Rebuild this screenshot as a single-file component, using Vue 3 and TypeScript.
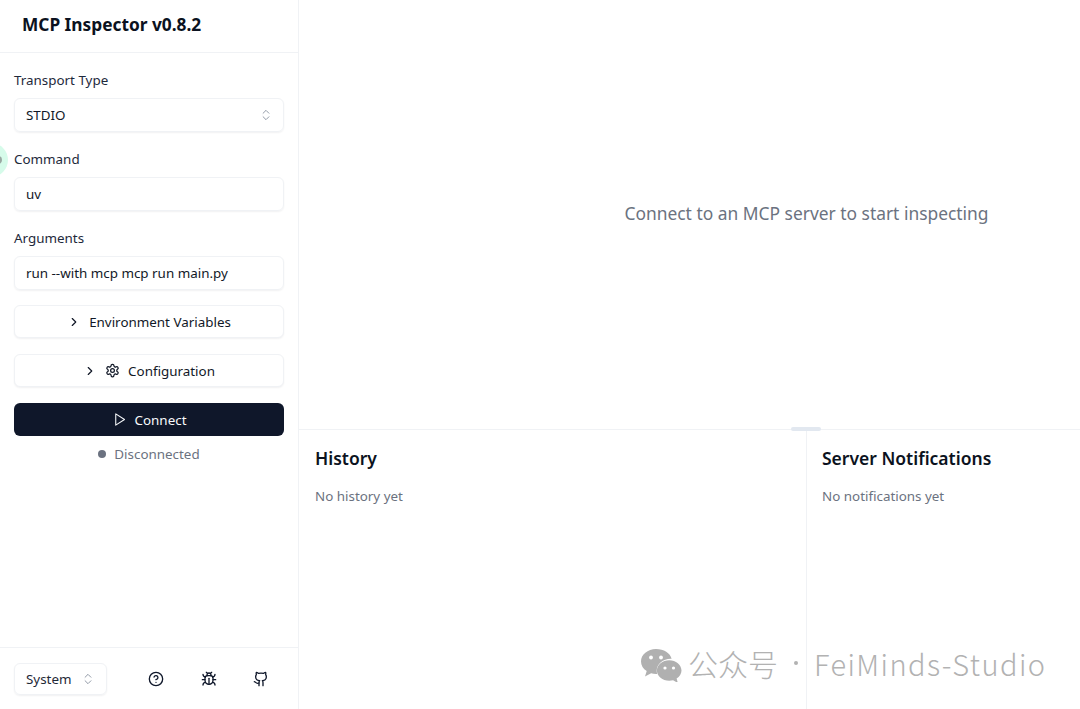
<template>
  <div class="app">
    <aside class="sidebar">
      <div class="side-head">
        <h1>MCP Inspector v0.8.2</h1>
      </div>

      <div class="side-form">
        <div class="field">
          <label>Transport Type</label>
          <div class="control select-control">
            <span>STDIO</span>
            <svg class="chev-updown" viewBox="0 0 24 24"><path d="m7 15 5 5 5-5" /><path d="m7 9 5-5 5 5" /></svg>
          </div>
        </div>
        <div class="field">
          <label>Command</label>
          <div class="control">uv</div>
        </div>
        <div class="field">
          <label>Arguments</label>
          <div class="control">{{ args }}</div>
        </div>

        <button class="outline-btn env-btn">
          <svg class="icon chev" viewBox="0 0 24 24"><path d="m9 18 6-6-6-6" /></svg>
          <span>Environment Variables</span>
        </button>
        <button class="outline-btn conf-btn">
          <svg class="icon chev" viewBox="0 0 24 24"><path d="m9 18 6-6-6-6" /></svg>
          <svg class="icon gear" viewBox="0 0 24 24">
            <path d="M12.22 2h-.44a2 2 0 0 0-2 2v.18a2 2 0 0 1-1 1.73l-.43.25a2 2 0 0 1-2 0l-.15-.08a2 2 0 0 0-2.73.73l-.22.38a2 2 0 0 0 .73 2.73l.15.1a2 2 0 0 1 1 1.72v.51a2 2 0 0 1-1 1.74l-.15.09a2 2 0 0 0-.73 2.73l.22.38a2 2 0 0 0 2.73.73l.15-.08a2 2 0 0 1 2 0l.43.25a2 2 0 0 1 1 1.73V20a2 2 0 0 0 2 2h.44a2 2 0 0 0 2-2v-.18a2 2 0 0 1 1-1.73l.43-.25a2 2 0 0 1 2 0l.15.08a2 2 0 0 0 2.73-.73l.22-.39a2 2 0 0 0-.73-2.73l-.15-.08a2 2 0 0 1-1-1.74v-.5a2 2 0 0 1 1-1.74l.15-.09a2 2 0 0 0 .73-2.73l-.22-.38a2 2 0 0 0-2.73-.73l-.15.08a2 2 0 0 1-2 0l-.43-.25a2 2 0 0 1-1-1.73V4a2 2 0 0 0-2-2z" />
            <circle cx="12" cy="12" r="3" />
          </svg>
          <span>Configuration</span>
        </button>
        <button class="connect-btn">
          <svg class="icon play" viewBox="0 0 24 24"><polygon points="6 3 20 12 6 21 6 3" /></svg>
          <span>Connect</span>
        </button>
        <div class="status">
          <i class="status-dot"></i>
          <span>Disconnected</span>
        </div>
      </div>

      <div class="side-foot">
        <div class="theme-select">
          <span>System</span>
          <svg class="chev-updown" viewBox="0 0 24 24"><path d="m7 15 5 5 5-5" /><path d="m7 9 5-5 5 5" /></svg>
        </div>
        <div class="foot-icons">
          <svg class="foot-icon" viewBox="0 0 24 24">
            <circle cx="12" cy="12" r="10" />
            <path d="M9.09 9a3 3 0 0 1 5.83 1c0 2-3 3-3 3" />
            <path d="M12 17h.01" />
          </svg>
          <svg class="foot-icon" viewBox="0 0 24 24">
            <path d="m8 2 1.88 1.88" /><path d="M14.12 3.88 16 2" />
            <path d="M9 7.13v-1a3.003 3.003 0 1 1 6 0v1" />
            <path d="M12 20c-3.3 0-6-2.7-6-6v-3a4 4 0 0 1 4-4h4a4 4 0 0 1 4 4v3c0 3.3-2.7 6-6 6" />
            <path d="M12 20v-9" /><path d="M6.53 9C4.6 8.8 3 7.1 3 5" /><path d="M6 13H2" />
            <path d="M3 21c0-2.1 1.7-3.9 3.8-4" /><path d="M20.97 5c0 2.1-1.6 3.8-3.5 4" />
            <path d="M22 13h-4" /><path d="M17.2 17c2.1.1 3.8 1.9 3.8 4" />
          </svg>
          <svg class="foot-icon" viewBox="0 0 24 24">
            <path d="M15 22v-4a4.8 4.8 0 0 0-1-3.5c3 0 6-2 6-5.5.08-1.25-.27-2.48-1-3.5.28-1.15.28-2.35 0-3.5 0 0-1 0-3 1.5-2.64-.5-5.36-.5-8 0C6 2 5 2 5 2c-.3 1.15-.3 2.35 0 3.5A5.403 5.403 0 0 0 4 9c0 3.5 3 5.5 6 5.5-.39.49-.68 1.05-.85 1.65-.17.6-.22 1.23-.15 1.85v4" />
            <path d="M9 18c-4.51 2-5-2-7-2" />
          </svg>
        </div>
      </div>
    </aside>

    <main class="main">
      <section class="top-pane">
        <p class="empty-msg">Connect to an MCP server to start inspecting</p>
      </section>
      <div class="resize-bar"><span class="handle"></span></div>
      <section class="bottom-pane">
        <div class="log-col history-col">
          <h2>History</h2>
          <p>No history yet</p>
        </div>
        <div class="log-col notif-col">
          <h2>Server Notifications</h2>
          <p>No notifications yet</p>
        </div>
      </section>
    </main>

    <div class="touch-blob"><i></i></div>

    <div class="watermark">
      <svg class="wechat" viewBox="0 0 42 34">
        <path d="M16 1C7.7 1 1 6.6 1 13.400c0 3.900 2.200 7.300 5.700 9.600L5 28.500l6.100-3.200c1.500.4 3.100.6 4.900.6h1.200a11 11 0 0 1-.5-3.300c0-6.600 6.300-11.900 14-11.900h.9C30.300 5 23.800 1 16 1z" />
        <path d="M41.500 22.500c0-5.700-5.600-10.300-12.300-10.300s-12.300 4.600-12.300 10.300 5.600 10.300 12.300 10.300c1.400 0 2.700-.2 3.900-.5l4.800 2.700-1.300-4.500c3-1.900 4.900-4.700 4.900-8z" />
        <circle class="eye" cx="11" cy="9.500" r="1.900" /><circle class="eye" cx="21" cy="9.500" r="1.900" />
        <circle class="eye" cx="25" cy="20" r="1.600" /><circle class="eye" cx="33.500" cy="20" r="1.600" />
      </svg>
      <span class="wm-cn">公众号</span>
      <span class="wm-dot"></span>
      <span class="wm-en">FeiMinds-Studio</span>
    </div>
  </div>
</template>

<script setup lang="ts">
const args = 'run --with mcp mcp run main.py'
</script>

<style>
html,
body {
  margin: 0;
  background: #fff;
}
</style>

<style scoped>
.app {
  position: relative;
  display: flex;
  width: 1080px;
  height: 709px;
  overflow: hidden;
  font-family: "Noto Sans", "Noto Sans CJK SC", sans-serif;
  font-size: 13.4px;
  color: #0f172a;
  background: #fff;
}

.sidebar {
  width: 298px;
  flex-shrink: 0;
  display: flex;
  flex-direction: column;
  border-right: 1px solid #f0f2f5;
}

.side-head {
  height: 53px;
  box-sizing: border-box;
  padding-left: 22px;
  display: flex;
  align-items: center;
  border-bottom: 1px solid #f0f2f5;
}

.side-head h1 {
  margin: 0 0 4px;
  font-size: 17.3px;
  font-weight: 700;
  color: #0b1220;
}

.side-form {
  flex: 1;
  padding: 17px 14px 0;
  display: flex;
  flex-direction: column;
}

.field {
  display: flex;
  flex-direction: column;
  margin-bottom: 17px;
}

.field:nth-child(3) {
  margin-bottom: 15px;
}

.field label {
  height: 20px;
  line-height: 20px;
  margin-bottom: 8px;
  color: #1e293b;
}

.control {
  height: 32px;
  line-height: 32px;
  padding: 0 11px;
  border: 1px solid #f0f2f5;
  border-radius: 6px;
  box-shadow: 0 1px 2px rgba(15, 23, 42, 0.06);
  color: #111827;
}

.select-control {
  display: flex;
  align-items: center;
  justify-content: space-between;
  padding-right: 10px;
}

.chev-updown {
  width: 14px;
  height: 14px;
  fill: none;
  stroke: #8b93a1;
  stroke-width: 1.6;
  stroke-linecap: round;
  stroke-linejoin: round;
}

.outline-btn,
.connect-btn {
  display: flex;
  align-items: center;
  justify-content: center;
  font: inherit;
  border-radius: 6px;
  padding: 0;
  cursor: pointer;
}

.outline-btn {
  height: 33px;
  background: #fff;
  color: #111827;
  border: 1px solid #f0f2f5;
  box-shadow: 0 1px 2px rgba(15, 23, 42, 0.06);
  margin-bottom: 16px;
}

.icon {
  width: 14px;
  height: 14px;
  fill: none;
  stroke: currentColor;
  stroke-width: 2;
  stroke-linecap: round;
  stroke-linejoin: round;
  flex-shrink: 0;
}

.env-btn .chev {
  margin-right: 8px;
}

.conf-btn .chev {
  margin-right: 8px;
}

.conf-btn .gear {
  width: 15px;
  height: 15px;
  margin-right: 8px;
}

.connect-btn {
  height: 33px;
  background: #0f172a;
  color: #f8fafc;
  border: none;
}

.connect-btn .play {
  width: 15px;
  height: 15px;
  margin-right: 8px;
  stroke-width: 1.7;
}

.status {
  margin-top: 8px;
  height: 20px;
  display: flex;
  align-items: center;
  justify-content: center;
  color: #6b7280;
}

.status-dot {
  width: 8px;
  height: 8px;
  border-radius: 50%;
  background: #6b7280;
  margin-right: 8px;
}

.side-foot {
  height: 62px;
  box-sizing: border-box;
  border-top: 1px solid #f0f2f5;
  padding: 15px 14px 0;
  display: flex;
  align-items: flex-start;
}

.theme-select {
  width: 93px;
  height: 32px;
  box-sizing: border-box;
  padding: 0 11px 0 11px;
  display: flex;
  align-items: center;
  justify-content: space-between;
  border: 1px solid #f0f2f5;
  border-radius: 6px;
  box-shadow: 0 1px 2px rgba(15, 23, 42, 0.06);
  color: #1f2937;
}

.foot-icons {
  margin-left: 41px;
  margin-top: 8px;
  display: flex;
  gap: 36.5px;
}

.foot-icon {
  width: 16px;
  height: 16px;
  fill: none;
  stroke: #0f172a;
  stroke-width: 2;
  stroke-linecap: round;
  stroke-linejoin: round;
}

.main {
  flex: 1;
  min-width: 0;
  display: flex;
  flex-direction: column;
}

.top-pane {
  height: 429px;
  flex-shrink: 0;
  display: flex;
  justify-content: center;
  padding-top: 200px;
  padding-left: 234px;
  box-sizing: border-box;
}

.empty-msg {
  margin: 0;
  font-size: 17.4px;
  line-height: 26px;
  color: #6b7280;
}

.resize-bar {
  position: relative;
  height: 1px;
  background: #f0f2f5;
  flex-shrink: 0;
}

.handle {
  position: absolute;
  left: 492px;
  top: -2px;
  width: 30px;
  height: 4px;
  border-radius: 2px;
  background: #e2e8f0;
}

.bottom-pane {
  flex: 1;
  display: flex;
  min-height: 0;
}

.log-col {
  padding: 15px 14px 0 15px;
  box-sizing: border-box;
}

.history-col {
  width: 508px;
  padding-left: 16px;
  border-right: 1px solid #f0f2f5;
}

.notif-col {
  flex: 1;
}

.log-col h2 {
  margin: 0 0 15px;
  font-size: 17.5px;
  line-height: 26px;
  font-weight: 600;
  color: #0b1220;
}

.log-col p {
  margin: 0;
  line-height: 20px;
  color: #6b7280;
}

.touch-blob {
  position: absolute;
  left: -26px;
  top: 143px;
  width: 34px;
  height: 34px;
  border-radius: 50%;
  background: #d6fbea;
  display: flex;
  align-items: center;
  justify-content: center;
}

.touch-blob i {
  width: 8px;
  height: 8px;
  margin-left: 14px;
  border-radius: 50%;
  background: #9aa8a2;
}

.watermark {
  position: absolute;
  left: 640px;
  top: 643px;
  display: flex;
  align-items: center;
  color: #b2b2b2;
  height: 40px;
  font-family: "Noto Sans CJK SC", "Noto Sans", sans-serif;
  font-weight: 300;
}

.wechat {
  width: 42px;
  height: 34px;
  fill: #b0b0b0;
  margin: 4px 6px 0 0;
}

.wechat .eye {
  fill: #fff;
}

.wm-cn {
  font-size: 30px;
}

.wm-dot {
  width: 4px;
  height: 4px;
  border-radius: 50%;
  background: #b2b2b2;
  margin: 0 16px 0 16px;
}

.wm-en {
  font-size: 29px;
  letter-spacing: 1.4px;
}
</style>
